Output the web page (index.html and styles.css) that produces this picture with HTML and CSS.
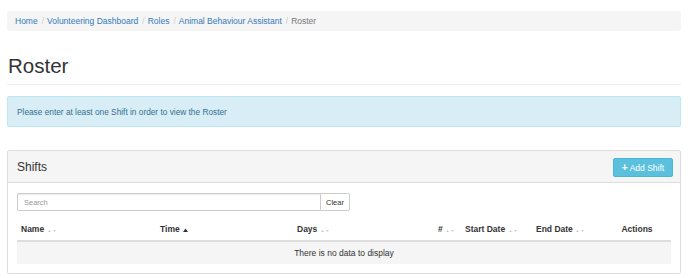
FILE: index.html
```html
<!DOCTYPE html>
<html lang="en">
<head>
    <meta charset="UTF-8">
    <title>Roster</title>
    <link rel="stylesheet" href="styles.css">
</head>
<body>
    <div class="container">
        <ol class="breadcrumb">
            <li><a href="#">Home</a></li>
            <li><a href="#">Volunteering Dashboard</a></li>
            <li><a href="#">Roles</a></li>
            <li><a href="#">Animal Behaviour Assistant</a></li>
            <li class="active">Roster</li>
        </ol>

        <div class="page-header">
            <h1>Roster</h1>
        </div>

        <div class="alert">Please enter at least one Shift in order to view the Roster</div>

        <div class="panel">
            <div class="panel-heading">
                <h3 class="panel-title">Shifts</h3>
                <button class="btn-add"><span class="plus">+</span>Add Shift</button>
            </div>
            <div class="panel-body">
                <div class="search-group">
                    <input type="text" class="search-input" placeholder="Search">
                    <button class="btn-clear">Clear</button>
                </div>

                <table class="table">
                    <thead>
                        <tr>
                            <th class="col-name">Name <span class="order"><svg width="8" height="4" viewBox="0 0 8 4"><path d="M0 4 L1.5 2 L3 4 Z M5 2 L8 2 L6.5 4 Z" fill="#ccc"/></svg></span></th>
                            <th class="col-time">Time <span class="order"><svg width="5" height="4" viewBox="0 0 5 4"><path d="M0 4 L2.5 0.5 L5 4 Z" fill="#333"/></svg></span></th>
                            <th class="col-days">Days <span class="order"><svg width="8" height="4" viewBox="0 0 8 4"><path d="M0 4 L1.5 2 L3 4 Z M5 2 L8 2 L6.5 4 Z" fill="#ccc"/></svg></span></th>
                            <th class="col-num"># <span class="order"><svg width="8" height="4" viewBox="0 0 8 4"><path d="M0 4 L1.5 2 L3 4 Z M5 2 L8 2 L6.5 4 Z" fill="#ccc"/></svg></span></th>
                            <th class="col-start">Start Date <span class="order"><svg width="8" height="4" viewBox="0 0 8 4"><path d="M0 4 L1.5 2 L3 4 Z M5 2 L8 2 L6.5 4 Z" fill="#ccc"/></svg></span></th>
                            <th class="col-end">End Date <span class="order"><svg width="8" height="4" viewBox="0 0 8 4"><path d="M0 4 L1.5 2 L3 4 Z M5 2 L8 2 L6.5 4 Z" fill="#ccc"/></svg></span></th>
                            <th class="col-actions">Actions</th>
                        </tr>
                    </thead>
                    <tbody>
                        <tr>
                            <td colspan="7" class="no-data">There is no data to display</td>
                        </tr>
                    </tbody>
                </table>
            </div>
        </div>
    </div>
</body>
</html>
```

FILE: styles.css
```css
body {
    margin: 0;
    padding: 0;
    font-family: 'Liberation Sans', Arial, sans-serif;
    font-size: 8.5px;
    color: #333;
    background-color: #fff;
}

.container {
    padding: 11px 7px 0 7px;
}

/* Breadcrumb */
.breadcrumb {
    list-style: none;
    margin: 0;
    padding: 0 8px;
    height: 20px;
    display: flex;
    align-items: center;
    background-color: #f5f5f5;
    border-radius: 2px;
}

.breadcrumb li {
    display: inline-block;
}

.breadcrumb li + li:before {
    content: "/";
    color: #ccc;
    padding: 0 3px 0 4px;
}

.breadcrumb a {
    color: #337ab7;
    text-decoration: none;
}

.breadcrumb .active {
    color: #777;
}

/* Page header */
.page-header {
    margin: 22px 0 11px 0;
    padding-bottom: 5px;
    border-bottom: 1px solid #eee;
}

h1 {
    margin: 0;
    font-size: 20.5px;
    font-weight: 500;
    line-height: 26px;
    padding-left: 1px;
}

/* Alert */
.alert {
    height: 29px;
    display: flex;
    align-items: center;
    padding: 0 9px;
    background-color: #d9edf7;
    border: 1px solid #bce8f1;
    border-radius: 2px;
    color: #31708f;
    font-size: 8.3px;
    margin-bottom: 23px;
}

/* Panel */
.panel {
    border: 1px solid #ddd;
    border-radius: 2px;
    box-shadow: 0 1px 1px rgba(0, 0, 0, 0.05);
}

.panel-heading {
    display: flex;
    align-items: center;
    justify-content: space-between;
    height: 31px;
    padding: 0 7px 0 9px;
    background-color: #f5f5f5;
    border-bottom: 1px solid #ddd;
}

.panel-title {
    margin: 0;
    font-size: 12px;
    font-weight: 500;
    color: #333;
}

.btn-add {
    font-family: inherit;
    font-size: 8.5px;
    color: #fff;
    background-color: #5bc0de;
    border: 1px solid #46b8da;
    border-radius: 2px;
    width: 60px;
    height: 19px;
    padding: 0;
    margin-top: 1px;
}

.plus {
    font-weight: bold;
    font-size: 10px;
    margin-right: 2px;
}

.panel-body {
    padding: 10px 9px 9px 9px;
}

/* Search */
.search-group {
    display: flex;
    height: 18px;
}

.search-input {
    box-sizing: border-box;
    width: 303px;
    height: 18px;
    margin: 0;
    padding: 0 6px;
    font-family: inherit;
    font-size: 7.5px;
    border: 1px solid #ccc;
    border-right: none;
    border-radius: 2px 0 0 2px;
    box-shadow: inset 0 1px 1px rgba(0, 0, 0, 0.075);
}

.search-input::placeholder {
    color: #999;
}

.btn-clear {
    box-sizing: border-box;
    width: 30px;
    height: 18px;
    padding: 0;
    font-family: inherit;
    font-size: 7.5px;
    color: #333;
    background-color: #fff;
    border: 1px solid #ccc;
    border-radius: 0 2px 2px 0;
}

/* Table */
.table {
    width: 100%;
    border-collapse: collapse;
    margin-top: 6px;
    table-layout: fixed;
}

.table th {
    text-align: left;
    font-weight: bold;
    padding: 6px 4px 5px 4px;
    height: 12px;
    border-bottom: 2px solid #ddd;
    white-space: nowrap;
}

.order svg {
    vertical-align: middle;
    margin-left: 1px;
}

.col-name { width: 131px; }
.col-time { width: 129px; }
.col-days { width: 133px; }
.col-num { width: 19px; }
.col-start { width: 63px; }
.col-end { width: 63px; }
.col-actions { text-align: center !important; }

.no-data {
    text-align: center;
    background-color: #f5f5f5;
    height: 22px;
    padding: 0;
}
```
